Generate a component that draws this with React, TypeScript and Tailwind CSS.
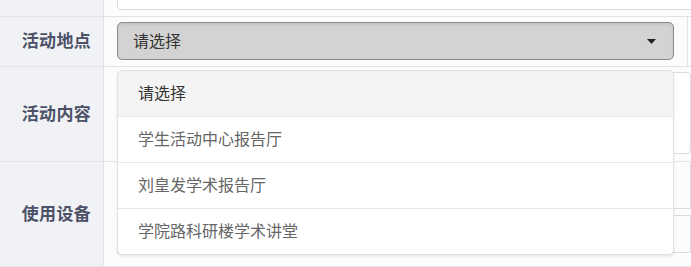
import React from "react";

const font = { fontFamily: '"Noto Sans CJK SC", "Noto Sans", sans-serif' };

const options = ["请选择", "学生活动中心报告厅", "刘皇发学术报告厅", "学院路科研楼学术讲堂"];

const Label = ({ text }: { text: string }) => (
  <div className="w-[104px] shrink-0 bg-[#f1f2f5] border-r border-[#e3e3e3] flex items-center justify-end pr-[12px] pb-[4px]">
    <span className="text-[17px] font-bold text-[#4c5168] leading-none tracking-[0.3px]">{text}</span>
  </div>
);

const App = () => {
  return (
    <div className="relative w-[691px] h-[267px] overflow-hidden bg-[#f7f7f7]" style={font}>
      {/* row 0 (cut off) */}
      <div className="flex h-[17px] border-b border-[#e3e3e3]">
        <Label text="" />
        <div className="flex-1 bg-[#fcfcfc] pl-[13px]">
          <div className="h-[10px] w-[600px] bg-white border border-t-0 border-[#dcdcdc] rounded-b-[5px]" />
        </div>
      </div>

      {/* row 1 */}
      <div className="flex h-[50px] border-b border-[#e3e3e3]">
        <Label text="活动地点" />
        <div className="flex-1 bg-[#fcfcfc] pl-[13px] flex">
          <div className="mt-[5px] h-[38px] w-[557px] rounded-[5px] border border-[#8c8c8c] bg-[#d3d3d3] shadow-[inset_0_2px_3px_rgba(0,0,0,0.08)] flex items-center justify-between pl-[15px] pr-[17px]">
            <span className="text-[16px] text-[#333] leading-none pb-[3px]">请选择</span>
            <svg width="9" height="5" viewBox="0 0 9 5">
              <path d="M0 0 H9 L4.5 5 Z" fill="#222" />
            </svg>
          </div>
          <div className="ml-[13px] h-full border-l border-[#e3e3e3]" />
        </div>
      </div>

      {/* row 2 */}
      <div className="flex h-[95px] border-b border-[#e3e3e3]">
        <Label text="活动内容" />
        <div className="flex-1 bg-[#fcfcfc] pl-[13px] pt-[5px]">
          <div className="h-[82px] w-[574px] bg-white border border-[#dcdcdc] rounded-[4px]" />
        </div>
      </div>

      {/* row 3 */}
      <div className="flex h-[105px] border-b border-[#e3e3e3]">
        <Label text="使用设备" />
        <div className="flex-1 bg-[#fcfcfc] pl-[13px] flex flex-col gap-[6px]">
          <div className="h-[47px] w-[574px] bg-[#fcfcfc] border-b border-r border-[#dcdcdc]" />
          <div className="h-[38px] w-[574px] bg-[#fcfcfc] border border-[#dcdcdc]" />
        </div>
      </div>

      {/* open dropdown */}
      <div className="absolute left-[117px] top-[70px] w-[557px] bg-white border border-[#e2e2e2] rounded-[5px] shadow-[0_2px_3px_rgba(0,0,0,0.08)] overflow-hidden">
        {options.map((o, i) => (
          <div
            key={o}
            className={
              i === 0
                ? "h-[46px] flex items-center pl-[20px] pb-[3px] text-[16px] leading-none text-[#333] bg-[#f4f4f4] border-b border-[#e6e6e6]"
                : i === options.length - 1
                ? "h-[45px] flex items-center pl-[20px] pb-[3px] text-[16px] leading-none text-[#666]"
                : "h-[46px] flex items-center pl-[20px] pb-[3px] text-[16px] leading-none text-[#666] border-b border-[#e6e6e6]"
            }
          >
            {o}
          </div>
        ))}
      </div>
    </div>
  );
};

export default App;
